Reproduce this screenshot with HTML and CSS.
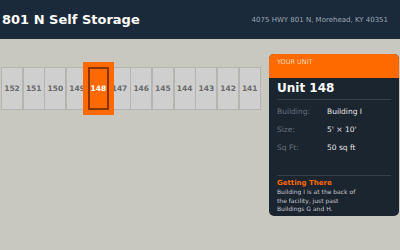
FILE: index.html
```html
<!DOCTYPE html>
<html lang="en">
<head>
    <meta charset="UTF-8">
    <meta name="viewport" content="width=device-width, initial-scale=1.0">
    <title>801 N Self Storage</title>
    <link rel="stylesheet" href="styles.css">
</head>
<body>
    <header class="topbar">
        <h1>801 N Self Storage</h1>
        <span class="address">4075 HWY 801 N, Morehead, KY 40351</span>
    </header>
    <main class="site">
        <div class="units">
            <div class="unit">152</div>
            <div class="unit">151</div>
            <div class="unit">150</div>
            <div class="unit">149</div>
            <div class="unit selected">148</div>
            <div class="unit">147</div>
            <div class="unit">146</div>
            <div class="unit">145</div>
            <div class="unit">144</div>
            <div class="unit">143</div>
            <div class="unit">142</div>
            <div class="unit">141</div>
        </div>
        <aside class="panel">
            <div class="panel-head">YOUR UNIT</div>
            <div class="panel-body">
                <h2>Unit 148</h2>
                <div class="row"><span class="label">Building:</span><span class="value">Building I</span></div>
                <div class="row"><span class="label">Size:</span><span class="value">5' × 10'</span></div>
                <div class="row"><span class="label">Sq Ft:</span><span class="value">50 sq ft</span></div>
                <div class="directions">
                    <h3>Getting There</h3>
                    <p>Building I is at the back of the facility, just past Buildings G and H.</p>
                </div>
            </div>
        </aside>
    </main>
</body>
</html>
```

FILE: styles.css
```css
body {
    margin: 0;
    font-family: "DejaVu Sans", Verdana, sans-serif;
    background-color: #c8c8c0;
    width: 400px;
    height: 250px;
    overflow: hidden;
}

.topbar {
    background-color: #1b2a3a;
    height: 39px;
    display: flex;
    align-items: center;
    justify-content: space-between;
    padding: 0 12px 0 2px;
}

.topbar h1 {
    margin: 0;
    color: #fff;
    font-size: 13px;
    font-weight: bold;
}

.address {
    color: #9aa5b1;
    font-size: 7px;
}

.site {
    display: flex;
    align-items: flex-start;
    justify-content: space-between;
    padding: 0 1px;
}

.units {
    display: flex;
    margin-top: 28px;
}

.unit {
    width: 20px;
    height: 41px;
    background-color: #cfcfcf;
    border: 1px solid #b4b4b0;
    margin-right: -0.3px;
    display: flex;
    align-items: center;
    justify-content: center;
    color: #6a6a6a;
    font-size: 7.5px;
    font-weight: bold;
}

.unit.selected {
    position: relative;
    z-index: 1;
    width: 17px;
    height: 39px;
    background-color: #ff6a00;
    border: 2px solid #8a3500;
    box-shadow: 0 0 0 5px #ff6a00;
    color: #fff;
}

.panel {
    margin-top: 15px;
    width: 130px;
    height: 162px;
    background-color: #1b2530;
    border-radius: 5px;
    overflow: hidden;
}

.panel-head {
    background-color: #ff6a00;
    color: #ffd8bd;
    font-size: 6.5px;
    height: 24px;
    padding: 4px 8px 0;
    box-sizing: border-box;
}

.panel-body {
    padding: 0 8px;
}

.panel-body h2 {
    margin: 0;
    color: #fff;
    font-size: 12px;
    padding: 3px 0 4px;
    border-bottom: 1px solid #33414f;
}

.row {
    display: flex;
    font-size: 7.5px;
    height: 18px;
    align-items: center;
}

.row:first-of-type {
    margin-top: 2px;
}

.label {
    color: #66727f;
    width: 50px;
}

.value {
    color: #e2e4e8;
}

.directions {
    margin-top: 19px;
    border-top: 1px solid #33414f;
    padding-top: 3px;
}

.directions h3 {
    margin: 0;
    color: #ff6a00;
    font-size: 7px;
}

.directions p {
    margin: 1px 0 0;
    color: #c4c9d0;
    font-size: 6px;
    line-height: 8.7px;
    width: 86px;
}
```
